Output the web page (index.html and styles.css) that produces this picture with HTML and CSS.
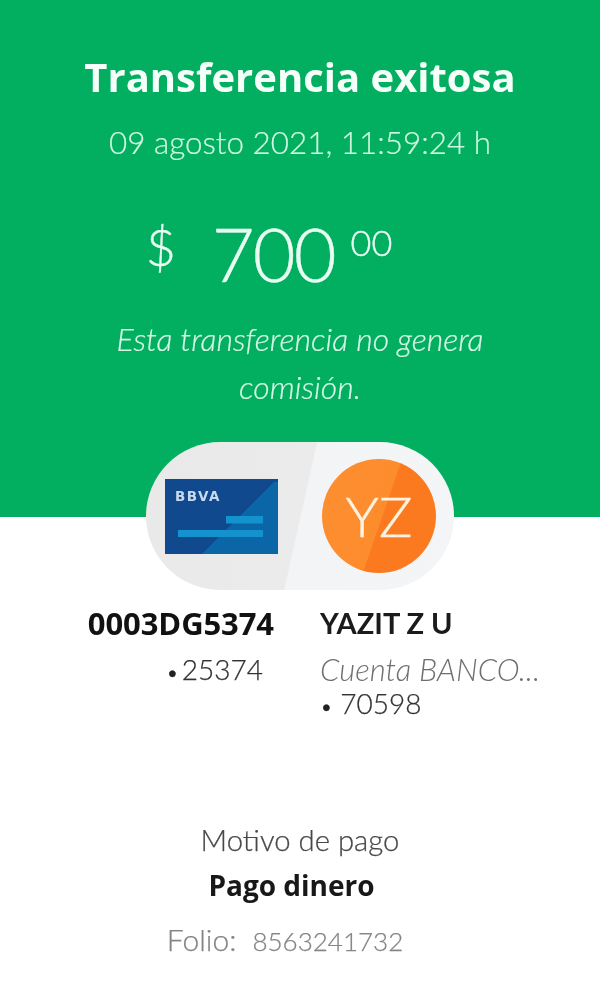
FILE: index.html
```html
<!DOCTYPE html>
<html lang="es">
<head>
<meta charset="utf-8">
<title>Transferencia exitosa</title>
<link rel="stylesheet" href="styles.css">
</head>
<body>
<main class="page">
  <header class="hero">
    <h1 class="hero-title">Transferencia exitosa</h1>
    <p class="hero-date">09 agosto 2021, 11:59:24 h</p>
    <div class="amount">
      <span class="amount-sign">$</span>
      <span class="amount-value">700</span>
      <span class="amount-cents">00</span>
    </div>
    <p class="hero-note">Esta transferencia no genera<br>comisión.</p>
  </header>

  <section class="pill">
    <div class="pill-side pill-left">
      <svg class="card" viewBox="0 0 113 75" aria-hidden="true">
        <rect width="113" height="75" fill="#10498e"/>
        <polygon points="37,75 109,3 113,3 113,75" fill="#0b66a7"/>
        <rect x="61" y="37" width="37" height="7.5" fill="#1392cd"/>
        <rect x="13" y="51" width="85" height="7" fill="#1392cd"/>
        <text class="card-brand" x="10" y="21.5">BBVA</text>
      </svg>
    </div>
    <div class="avatar"><span class="avatar-text">YZ</span></div>
  </section>

  <section class="accounts">
    <div class="account account-from">
      <div class="account-name account-name-from">0003DG5374</div>
      <div class="account-number account-number-from"><span class="dot">•</span>25374</div>
    </div>
    <div class="account">
      <div class="account-name">YAZIT Z U</div>
      <div class="account-bank">Cuenta BANCO...</div>
      <div class="account-number"><span class="dot">•</span> 70598</div>
    </div>
  </section>

  <section class="details">
    <div class="reason-label">Motivo de pago</div>
    <div class="reason-value">Pago dinero</div>
    <div class="folio"><span class="folio-label">Folio:</span><span class="folio-number">8563241732</span></div>
  </section>
</main>
</body>
</html>
```

FILE: styles.css
```css
* { box-sizing: border-box; }
html, body { margin: 0; padding: 0; background: #fff; }
body { font-family: "Lato", "Liberation Sans", sans-serif; }

.page { width: 600px; height: 1008px; overflow: hidden; background: #fff; filter: blur(0.5px); }

.hero {
  height: 517px;
  padding-top: 52px;
  background: #02ae5f;
  color: #e6fbef;
  text-align: center;
}
.hero-title {
  margin: 0;
  font-family: "Open Sans", sans-serif;
  font-size: 40px;
  line-height: 50px;
  font-weight: 700;
  color: #f3fff8;
}
.hero-date {
  margin: 22px 0 0;
  font-size: 31.4px;
  line-height: 36px;
  font-weight: 300;
  color: #d0f7e2;
  -webkit-text-stroke: 0.2px currentColor;
}
.amount {
  display: flex;
  justify-content: center;
  align-items: flex-start;
  height: 90px;
  margin: 48px 0 0;
  padding-right: 62px;
  font-weight: 300;
  color: #e9fdf3;
  -webkit-text-stroke: 0.4px currentColor;
}
.amount-sign { margin: 13px 36px 0 0; font-size: 52px; line-height: 50px; }
.amount-value { font-size: 74px; line-height: 92px; letter-spacing: -2px; }
.amount-cents { margin: 14px 0 0 16px; font-size: 36px; line-height: 40px; }
.hero-note {
  margin: 17px 0 0;
  font-size: 32px;
  line-height: 48px;
  font-style: italic;
  font-weight: 300;
  color: #d8f8e7;
  -webkit-text-stroke: 0.2px currentColor;
}

.pill {
  display: flex;
  align-items: center;
  width: 308px;
  height: 148px;
  margin: -75px 0 0 146px;
  position: relative;
  border-radius: 74px;
  background: linear-gradient(102.6deg, #e9e9e9 0, #ebebeb 50%, #f3f4f5 50.4%, #f4f5f6 100%);
}
.pill-side { display: flex; padding-left: 19px; }
.card { display: block; width: 113px; height: 75px; }
.card-brand {
  font-family: "DejaVu Sans", sans-serif;
  font-size: 13.5px;
  font-weight: 700;
  letter-spacing: 1.5px;
  fill: #c8daee;
}
.avatar {
  display: flex;
  align-items: center;
  justify-content: center;
  width: 114px;
  height: 114px;
  margin-left: 44px;
  border-radius: 50%;
  background: linear-gradient(109deg, #fd8f30 0, #fd8c2d 52%, #fb7a20 52.5%, #fb7a20 100%);
}
.avatar-text { font-size: 56px; font-weight: 300; line-height: 1; color: #fff3e2; -webkit-text-stroke: 0.4px currentColor; }

.accounts {
  display: grid;
  grid-template-columns: 274px 1fr;
  column-gap: 46px;
  margin-top: 13px;
}
.account-from { text-align: right; }
.account-name {
  font-size: 29px;
  line-height: 40px;
  font-weight: 700;
  color: #1b1b1b;
}
.account-name-from { font-family: "Open Sans", sans-serif; font-size: 31px; letter-spacing: -0.1px; color: #111; }
.account-number {
  font-size: 28px;
  line-height: 34px;
  font-weight: 300;
  color: #333;
  -webkit-text-stroke: 0.25px currentColor;
}
.account-number-from { margin-top: 9px; padding-right: 11px; }
.account-bank {
  margin-top: 9px;
  font-size: 31px;
  line-height: 34px;
  font-style: italic;
  font-weight: 300;
  color: #6f6f6f;
  white-space: nowrap;
}
.dot { font-size: 22px; color: #222; }
.account-number-from .dot { margin-right: 3px; }

.details { margin-top: 97px; text-align: center; }
.reason-label {
  font-size: 29.3px;
  line-height: 40px;
  color: #484848;
  font-weight: 300;
  -webkit-text-stroke: 0.25px currentColor;
}
.reason-value {
  margin-top: 7px;
  padding-right: 17px;
  font-family: "Open Sans", sans-serif;
  font-size: 28px;
  line-height: 36px;
  font-weight: 700;
  color: #181818;
}
.folio {
  margin-top: 18px;
  line-height: 36px;
  font-weight: 300;
  color: #858585;
  padding-right: 30px;
  -webkit-text-stroke: 0.25px currentColor;
}
.folio-label { font-size: 30px; }
.folio-number { margin-left: 16px; font-size: 26px; }
```
